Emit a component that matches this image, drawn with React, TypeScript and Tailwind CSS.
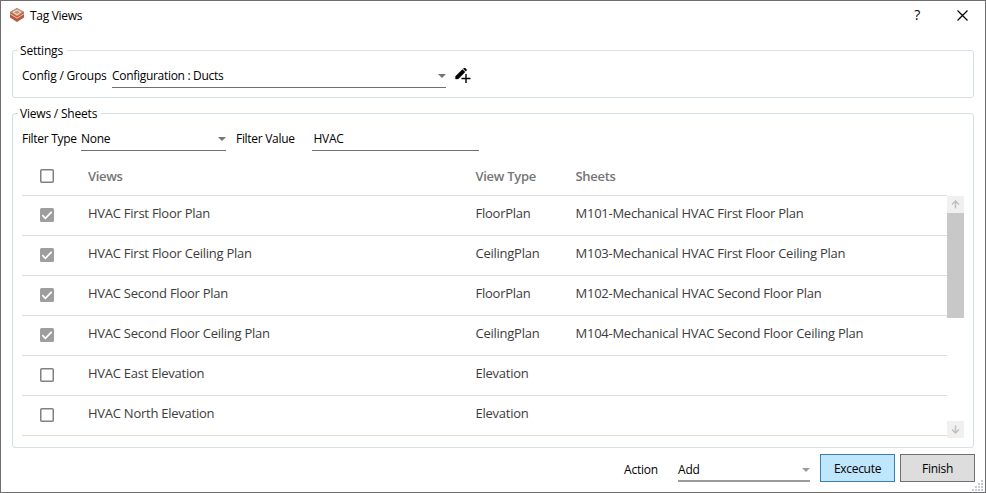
import React from "react";

const rows = [
  { on: true, view: "HVAC First Floor Plan", type: "FloorPlan", sheet: "M101-Mechanical HVAC First Floor Plan" },
  { on: true, view: "HVAC First Floor Ceiling Plan", type: "CeilingPlan", sheet: "M103-Mechanical HVAC First Floor Ceiling Plan" },
  { on: true, view: "HVAC Second Floor Plan", type: "FloorPlan", sheet: "M102-Mechanical HVAC Second Floor Plan" },
  { on: true, view: "HVAC Second Floor Ceiling Plan", type: "CeilingPlan", sheet: "M104-Mechanical HVAC Second Floor Ceiling Plan" },
  { on: false, view: "HVAC East Elevation", type: "Elevation", sheet: "" },
  { on: false, view: "HVAC North Elevation", type: "Elevation", sheet: "" },
];

function Logo() {
  return (
    <svg width="16" height="16" viewBox="0 0 16 16">
      <path d="M8 1 15 5v5.500L8 15 1 10.500V5Z" fill="#b9583a" />
      <path d="M8 1 15 5 8 9.500 1 5Z" fill="#c69478" />
      <path d="M1 6.800 8 11.200l7-4.400" fill="none" stroke="#e6c8ba" strokeWidth="1" />
      <path d="M4.200 5.200 8 3l3.800 2.200L8 7.700Z" fill="#c69478" stroke="#f3e4da" strokeWidth="1" />
    </svg>
  );
}

function Caret({ color = "#757575" }: { color?: string }) {
  return (
    <svg width="8" height="4" viewBox="0 0 8 4" className="shrink-0">
      <path d="M0 0h8L4 4Z" fill={color} />
    </svg>
  );
}

function Check({ on }: { on: boolean }) {
  return on ? (
    <svg width="14" height="14" viewBox="0 0 14 14" className="block">
      <rect width="14" height="14" rx="1.500" fill="#9e9e9e" />
      <path d="M2.300 7.200 5.400 10.300 11.700 3.800" fill="none" stroke="#fff" strokeWidth="1.700" />
    </svg>
  ) : (
    <svg width="14" height="14" viewBox="0 0 14 14" className="block">
      <rect x=".750" y=".750" width="12.500" height="12.500" rx="1" fill="none" stroke="#808080" strokeWidth="1.500" />
    </svg>
  );
}

function ScrollArrow({ down = false }: { down?: boolean }) {
  return (
    <div className="flex h-[17px] items-center justify-center bg-[#f0f0f0]">
      <svg width="9" height="9" viewBox="0 0 9 9" className={down ? "rotate-180" : ""}>
        <path d="M4.500 8.500V1.200M1 4.500l3.500-3.500L8 4.500" fill="none" stroke="#bfbfbf" strokeWidth="1.500" />
      </svg>
    </div>
  );
}

function Grip() {
  const dots = [[9, 0], [6, 3], [9, 3], [3, 6], [6, 6], [9, 6], [0, 9], [3, 9], [6, 9], [9, 9]];
  return (
    <svg width="11" height="11" viewBox="0 0 11 11" className="absolute right-0.5 bottom-px">
      {dots.map(([x, y]) => (
        <rect key={`${x}-${y}`} x={x} y={y} width="2" height="2" fill="#c3c9d6" />
      ))}
    </svg>
  );
}

export default function App() {
  return (
    <div className="relative flex h-[493px] w-[986px] flex-col overflow-hidden whitespace-nowrap border border-[#6e6e70] bg-white font-['Open_Sans',sans-serif] text-[12px] leading-[17px] tracking-[-0.3px] text-black">
      <header className="flex h-[41px] shrink-0 items-start pl-2">
        <div className="pt-1.5"><Logo /></div>
        <h1 className="grow pt-1.5 pl-[5px]">Tag Views</h1>
        <span className="mt-[5px] mr-[37px] text-[14px] font-medium">?</span>
        <svg width="11" height="11" viewBox="0 0 11 11" className="mt-[9px] mr-[17px]">
          <path d="M.5.500l10 10M10.500.500l-10 10" stroke="#000" strokeWidth="1.200" />
        </svg>
      </header>

      <fieldset className="mr-[11px] ml-[11px] h-14 w-[962px] shrink-0 rounded-[3px] border border-[#d5dfe5]">
        <legend className="ml-[5px] h-[17px] pr-1 pl-0.5 tracking-[-0.2px]">Settings</legend>
        <div className="flex h-[29px] pl-[9px]">
          <span className="w-[90px] pt-2 tracking-[-0.2px]">Config / Groups</span>
          <div className="flex w-[334px] justify-between border-b border-[#707070]">
            <span className="pt-2">Configuration : Ducts</span>
            <span className="pt-[15px]"><Caret /></span>
          </div>
          <svg width="16" height="16" viewBox="0 0 16 16" className="mt-[9px] ml-[9px]">
            <path d="M.500 11V8.300L7.400 1.400l2.700 2.700L3.200 11ZM8.200.800 9.100 0Q9.600-.300 10.100.100L11.500 1.500Q11.900 2 11.500 2.500l-.800.800Z" fill="#000" stroke="#000" strokeWidth=".300" />
            <path d="M11 6v9M6.500 10.500h9" stroke="#000" strokeWidth="1.400" />
          </svg>
        </div>
      </fieldset>

      <fieldset className="mt-[7px] ml-[11px] h-[343px] w-[962px] shrink-0 rounded-[3px] border border-[#d5dfe5]">
        <legend className="ml-[5px] h-[17px] pr-1 pl-0.5 tracking-[-0.2px]">Views / Sheets</legend>
        <div className="flex h-[29px] pl-[9px]">
          <span className="w-[59px] pt-2">Filter Type</span>
          <div className="flex w-[145px] justify-between border-b border-[#707070]">
            <span className="pt-2">None</span>
            <span className="pt-[15px]"><Caret /></span>
          </div>
          <span className="ml-2.5 w-[76px] pt-2">Filter Value</span>
          <div className="w-[167px] border-b border-[#707070] pt-2 pl-[1.500px]">HVAC</div>
        </div>
        <div className="ml-[9px] grid h-[45px] w-[925px] grid-cols-[66px_387.500px_100px_1fr] border-b border-[#dedede] text-[13px] leading-4 font-semibold text-[#757575]">
          <span className="pt-[18px] pl-[18px]"><Check on={false} /></span>
          <span className="pt-[17px]">Views</span>
          <span className="pt-[17px]">View Type</span>
          <span className="pt-[17px]">Sheets</span>
        </div>
        <div className="ml-[9px] flex h-[242px]">
          <div className="w-[925px]">
            {rows.map((r) => (
              <div key={r.view} className="grid h-10 grid-cols-[66px_387.500px_100px_1fr] border-b border-[#dedede] text-[13px] leading-4 tracking-[-0.250px] text-[#3c3c3c]">
                <span className="pt-3 pl-[18px]"><Check on={r.on} /></span>
                <span className="pt-[9px]">{r.view}</span>
                <span className="pt-[9px]">{r.type}</span>
                <span className="pt-[9px]">{r.sheet}</span>
              </div>
            ))}
          </div>
          <div className="flex w-[17px] flex-col">
            <ScrollArrow />
            <div className="h-[105px] bg-[#c8c8c8]" />
            <div className="grow" />
            <ScrollArrow down />
          </div>
        </div>
      </fieldset>

      <footer className="flex pt-1.5 pl-[623px]">
        <span className="w-[54px] pt-[7px] tracking-[-0.2px]">Action</span>
        <div className="flex h-7 w-[132px] justify-between border-b-2 border-[#9c9c9c]">
          <span className="pt-[7px] tracking-[-0.2px]">Add</span>
          <span className="pt-[14px]"><Caret color="#9c9c9c" /></span>
        </div>
        <button className="ml-2.5 h-7 w-[75px] border border-[#3c7fb1] bg-[#bee6fd] pt-px">Excecute</button>
        <button className="ml-[5px] h-7 w-[75px] border border-[#707070] bg-[#dddddd] pt-px">Finish</button>
      </footer>
      <Grip />
    </div>
  );
}
